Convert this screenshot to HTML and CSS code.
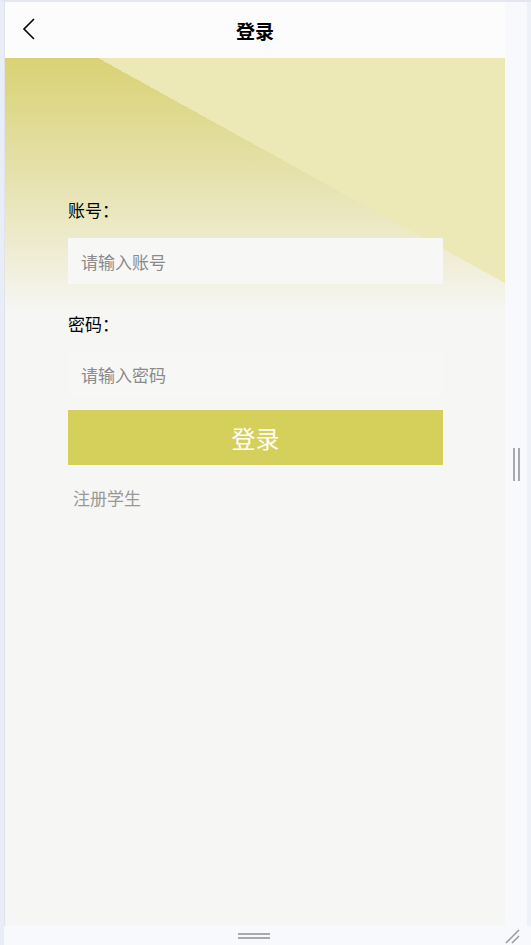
FILE: index.html
```html
<!DOCTYPE html>
<html lang="zh-CN">
<head>
    <meta charset="UTF-8">
    <meta name="viewport" content="width=device-width, initial-scale=1.0">
    <title>登录</title>
    <link rel="stylesheet" href="styles.css">
</head>
<body>
    <div class="shell">
        <div class="row">
            <div class="phone">
                <div class="header">
                    <span class="back">
                        <svg width="16" height="24" viewBox="0 0 16 24"><path d="M13 2 L3 12 L13 22" fill="none" stroke="#000" stroke-width="1.6"/></svg>
                    </span>
                    <span class="title">登录</span>
                </div>
                <div class="main">
                    <div class="form">
                        <div class="label">账号：</div>
                        <input type="text" class="in" placeholder="请输入账号">
                        <div class="label label2">密码：</div>
                        <input type="password" class="in in2" placeholder="请输入密码">
                        <button class="btn">登录</button>
                        <div class="reg">注册学生</div>
                    </div>
                </div>
            </div>
            <div class="side">
                <span class="grip"></span>
            </div>
            <div class="edge"></div>
        </div>
        <div class="bottom">
            <span class="bar"></span>
            <svg class="resize" width="16" height="16" viewBox="0 0 16 16"><path d="M1 15 L14 2 M7 15 L14 8" stroke="#999" stroke-width="1.5"/></svg>
        </div>
    </div>
</body>
</html>
```

FILE: styles.css
```css
*{
    margin: 0;
    padding: 0;
    box-sizing: border-box;
}
body{
    width: 531px;
    height: 945px;
    overflow: hidden;
    background-color: #f8f9fd;
    font-family: "Noto Sans CJK SC", "Noto Sans", sans-serif;
}
.shell{
    display: flex;
    flex-direction: column;
    height: 945px;
    border-top: 2px solid #e3e7ef;
    border-left: 4px solid #e9edf5;
}
.row{
    display: flex;
    height: 924px;
}
.phone{
    width: 501px;
    display: flex;
    flex-direction: column;
    border-left: 1px solid #dfe3eb;
}
.header{
    height: 56px;
    display: flex;
    align-items: center;
    justify-content: center;
    background-color: #fcfcfc;
    position: relative;
}
.back{
    position: absolute;
    left: 16px;
    top: 15px;
}
.title{
    font-size: 19px;
    font-weight: bold;
    color: #000;
}
.main{
    flex: 1;
    background-color: #f6f6f4;
    background-image:
        linear-gradient(to top right, rgba(236,233,181,0) 50%, #ece9b6 50%),
        linear-gradient(to bottom, #d9d274 0, #e6e2ae 120px, #eeecd0 190px, rgba(246,246,244,0) 255px);
    background-size: 407px 225px, 500px 260px;
    background-position: right top, left top;
    background-repeat: no-repeat;
    padding: 141px 0 0 63px;
}
.form{
    width: 375px;
    display: flex;
    flex-direction: column;
}
.label{
    font-size: 17px;
    line-height: 22px;
    color: #000;
}
.label2{
    margin-top: 29px;
}
.in{
    margin-top: 17px;
    height: 46px;
    border: none;
    outline: none;
    background-color: #f7f7f5;
    padding-left: 13px;
    font-size: 17px;
    font-family: "Noto Sans CJK SC", sans-serif;
}
.in2{
    margin-top: 16px;
}
.in::placeholder{
    color: #8a8a8a;
}
.btn{
    margin-top: 13px;
    height: 55px;
    border: none;
    background-color: #d5cf5c;
    color: #fff;
    font-size: 24px;
    font-family: "Noto Sans CJK SC", sans-serif;
}
.reg{
    margin-top: 22px;
    padding-left: 5px;
    font-size: 17px;
    line-height: 22px;
    color: #999;
}
.side{
    width: 22px;
    display: flex;
    align-items: center;
    justify-content: center;
}
.grip{
    width: 7px;
    height: 33px;
    border-left: 2px solid #a9a9a9;
    border-right: 2px solid #a9a9a9;
}
.edge{
    width: 4px;
    background-color: #eef1f8;
}
.bottom{
    flex: 1;
    display: flex;
    align-items: center;
    justify-content: center;
    position: relative;
}
.bar{
    width: 32px;
    height: 6px;
    border-top: 2px solid #a9a9a9;
    border-bottom: 2px solid #a9a9a9;
    margin-left: -28px;
}
.resize{
    position: absolute;
    right: 10px;
    bottom: 1px;
}
```
